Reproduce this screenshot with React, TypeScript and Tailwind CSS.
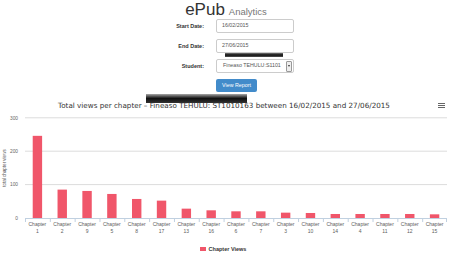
import React from 'react';

const bars = [
  { ch: '1', v: 246 },
  { ch: '2', v: 85 },
  { ch: '9', v: 81 },
  { ch: '5', v: 72 },
  { ch: '8', v: 57 },
  { ch: '17', v: 52 },
  { ch: '13', v: 28 },
  { ch: '16', v: 23 },
  { ch: '6', v: 20 },
  { ch: '7', v: 20 },
  { ch: '3', v: 16 },
  { ch: '10', v: 15 },
  { ch: '14', v: 12 },
  { ch: '4', v: 12 },
  { ch: '11', v: 12 },
  { ch: '12', v: 12 },
  { ch: '15', v: 11 },
];

const left = 25;
const right = 447;
const step = (right - left) / bars.length;
const base = 107;
const scale = 100 / 33.4;

const Chart: React.FC = () => (
  <svg width={450} height={127} className="block">
    {[300, 200, 100].map((t) => {
      const y = base - t / scale;
      return (
        <g key={t}>
          <line x1={left} x2={right} y1={y} y2={y} stroke="#dcdcdc" strokeWidth={1} />
          <text x={18} y={y + 1.8} fontSize={4.8} fill="#666" textAnchor="end">{t}</text>
        </g>
      );
    })}
    <text x={18} y={base + 1.8} fontSize={4.8} fill="#666" textAnchor="end">0</text>
    <line x1={left} x2={right} y1={base + 0.5} y2={base + 0.5} stroke="#c0d0e0" strokeWidth={1} />
    <text x={6} y={57} fontSize={4.5} fill="#555" textAnchor="middle" transform="rotate(-90 6 57)">
      total chapter views
    </text>
    {bars.map((b, i) => {
      const cx = left + step * (i + 0.5);
      const h = b.v / scale;
      return (
        <g key={b.ch}>
          <rect x={cx - 4.7} y={base - h} width={9.4} height={h} fill="#f0566a" />
          <line x1={left + step * i + 0.5} x2={left + step * i + 0.5} y1={base} y2={base + 4} stroke="#c0d0e0" />
          <text x={cx} y={115} fontSize={5} fill="#606060" textAnchor="middle">Chapter</text>
          <text x={cx} y={121.5} fontSize={5} fill="#606060" textAnchor="middle">{b.ch}</text>
        </g>
      );
    })}
    <line x1={right - 0.5} x2={right - 0.5} y1={base} y2={base + 4} stroke="#c0d0e0" />
  </svg>
);

const Field: React.FC<{ label: string; children: React.ReactNode }> = ({ label, children }) => (
  <>
    <div className="h-[14px] flex items-center justify-end text-[5.5px] font-bold text-[#333]">{label}</div>
    {children}
  </>
);

export default function App() {
  return (
    <div className="relative w-[450px] h-[254px] bg-white overflow-hidden" style={{ fontFamily: '"Liberation Sans", Arial, sans-serif' }}>
      <div className="h-[19px] flex items-baseline justify-center pl-[2px] pt-[1px]">
        <span className="text-[17px] leading-[17px] text-[#333]">ePub</span>
        <span className="text-[9.5px] leading-[17px] text-[#777] ml-[4px]">Analytics</span>
      </div>

      <div className="grid grid-cols-[204px_78px] gap-x-[12px] gap-y-[6px]">
        <Field label="Start Date:">
          <div className="h-[14px] border border-[#ccc] rounded-[2px] flex items-center px-[5px] text-[5.3px] text-[#555]">16/02/2015</div>
        </Field>
        <Field label="End Date:">
          <div className="h-[14px] border border-[#ccc] rounded-[2px] flex items-center px-[5px] text-[5.3px] text-[#555]">27/06/2015</div>
        </Field>
        <Field label="Student:">
          <div className="h-[14px] border border-[#ccc] rounded-[2px] flex items-center justify-between pl-[6px] pr-[1px] text-[5.3px] text-[#555] whitespace-nowrap">
            <span>Fineaso TEHULU:S1101</span>
            <span className="w-[6px] h-[11px] border border-[#999] bg-[#eee] rounded-[1px] flex items-center justify-center">
              <span className="block w-0 h-0 border-l-[1.5px] border-r-[1.5px] border-t-[2px] border-l-transparent border-r-transparent border-t-[#333]" />
            </span>
          </div>
        </Field>
      </div>

      <div className="flex pl-[216px] mt-[6px]">
        <button className="w-[41px] h-[13px] bg-[#428bca] rounded-[2px] text-white text-[5.3px] flex items-center justify-center">View Report</button>
      </div>

      <div className="relative h-[10px] mt-[9px] flex items-center justify-center text-[7.2px] text-[#333]" style={{ fontFamily: '"DejaVu Sans", sans-serif' }}>
        <span className="pr-[2px]">Total views per chapter – Fineaso TEHULU: ST1010163 between 16/02/2015 and 27/06/2015</span>
        <div className="absolute right-[5px] top-[2px] w-[7px] flex flex-col gap-[1px]">
          <span className="block h-[1px] bg-[#666]" />
          <span className="block h-[1px] bg-[#666]" />
          <span className="block h-[1px] bg-[#666]" />
        </div>
      </div>

      <Chart />

      <div className="flex items-center justify-center gap-[3px] mt-[7px] pr-[4px]">
        <span className="w-[6px] h-[4px] bg-[#f0566a]" />
        <span className="text-[5.5px] font-bold text-[#333]">Chapter Views</span>
      </div>

      <div className="absolute left-[225px] top-[53px] w-[58px] h-[4px] bg-gradient-to-b from-[#777] via-[#111] to-[#555]" />
      <div className="absolute left-[146px] top-[94px] w-[101px] h-[9px] bg-gradient-to-b from-[#aaa] via-[#111] to-[#333]" />
    </div>
  );
}
